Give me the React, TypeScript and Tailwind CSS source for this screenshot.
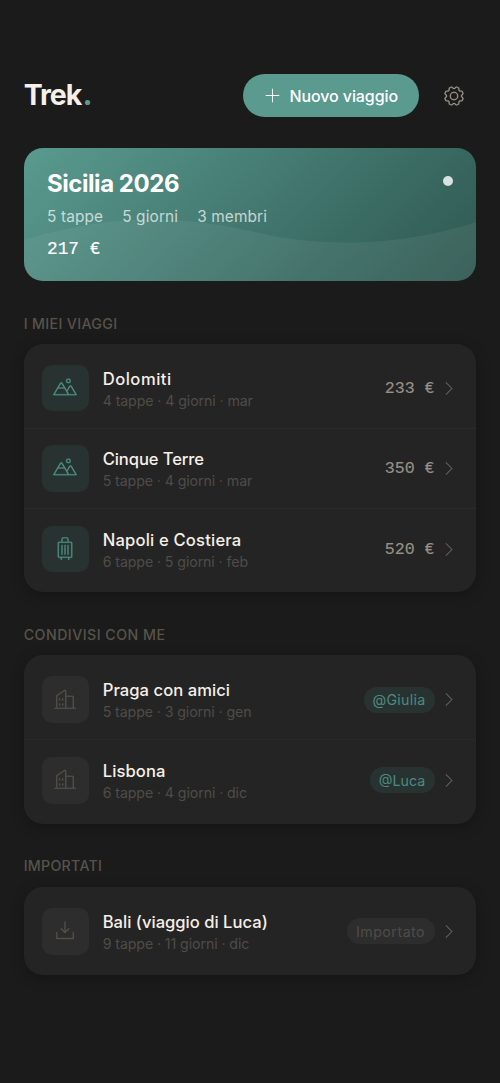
import type { IconType } from "react-icons";
import {
  PiBuildingsLight,
  PiCaretRightLight,
  PiDownloadSimpleLight,
  PiGearLight,
  PiMountainsLight,
  PiPlusLight,
  PiSuitcaseRollingLight,
} from "react-icons/pi";

type Trip = {
  name: string;
  details: string;
  icon: IconType;
  nameClass: string;
  price?: string;
  badge?: string;
  badgeClass?: string;
};

type Section = {
  title: string;
  titleClass: string;
  accent: boolean;
  trips: Trip[];
};

const sections: Section[] = [
  {
    title: "I MIEI VIAGGI",
    titleClass: "tracking-[0.35px]",
    accent: true,
    trips: [
      {
        name: "Dolomiti",
        details: "4 tappe · 4 giorni · mar",
        icon: PiMountainsLight,
        nameClass: "tracking-[0.5px]",
        price: "233 €",
      },
      {
        name: "Cinque Terre",
        details: "5 tappe · 4 giorni · mar",
        icon: PiMountainsLight,
        nameClass: "tracking-[-0.1px]",
        price: "350 €",
      },
      {
        name: "Napoli e Costiera",
        details: "6 tappe · 5 giorni · feb",
        icon: PiSuitcaseRollingLight,
        nameClass: "tracking-[0.18px]",
        price: "520 €",
      },
    ],
  },
  {
    title: "CONDIVISI CON ME",
    titleClass: "tracking-[0.48px]",
    accent: false,
    trips: [
      {
        name: "Praga con amici",
        details: "5 tappe · 3 giorni · gen",
        icon: PiBuildingsLight,
        nameClass: "tracking-[0.05px]",
        badge: "@Giulia",
        badgeClass: "w-[71px] bg-[#283331] text-[#4d8a80] tracking-[0.3px]",
      },
      {
        name: "Lisbona",
        details: "6 tappe · 4 giorni · dic",
        icon: PiBuildingsLight,
        nameClass: "tracking-[0.1px]",
        badge: "@Luca",
        badgeClass: "w-[65px] bg-[#283331] text-[#4d8a80]",
      },
    ],
  },
  {
    title: "IMPORTATI",
    titleClass: "tracking-[0.28px]",
    accent: false,
    trips: [
      {
        name: "Bali (viaggio di Luca)",
        details: "9 tappe · 11 giorni · dic",
        icon: PiDownloadSimpleLight,
        nameClass: "tracking-normal",
        badge: "Importato",
        badgeClass: "w-[88px] bg-[#2d2d2d] text-[#4f4c47] tracking-[0.5px]",
      },
    ],
  },
];

function Header() {
  return (
    <header className="flex h-[43px] items-center">
      <h1 className="flex-1 pb-[2px] text-[28.5px] leading-none font-bold tracking-[-1.1px] text-[#f5f0e8]">
        Trek
        <span className="ml-[2px] font-['Open_Sans',sans-serif] text-[30px] leading-none text-[#5a9a8f]">
          .
        </span>
      </h1>
      <button className="flex h-[43px] w-[175.5px] items-center rounded-full bg-[#5a9a8f] pl-[19.5px] text-white">
        <PiPlusLight className="size-[19px]" />
        <span className="ml-2 text-[16px] font-medium tracking-[-0.1px] whitespace-nowrap">
          Nuovo viaggio
        </span>
      </button>
      <button className="ml-[23.5px] mr-[10.3px] text-[#a09888]">
        <PiGearLight className="size-[24px]" stroke="currentColor" strokeWidth={2} />
      </button>
    </header>
  );
}

function CurrentTrip() {
  return (
    <section className="relative mt-[31px] h-[133px] overflow-hidden rounded-[19px] bg-[linear-gradient(135deg,#5a9a8f_0%,#3a6b63_70%,#305851_100%)] px-[23.3px] pt-[21px] text-white">
      <svg
        className="absolute inset-0 size-full"
        viewBox="0 0 453 133"
        preserveAspectRatio="none"
      >
        <path d="M0 92Q113 56 226 83T453 74V133H0Z" fill="#fff" fillOpacity="0.06" />
      </svg>
      <div className="relative">
        <div className="flex items-start justify-between">
          <h2 className="text-[24px] leading-[29px] font-bold tracking-[-0.45px]">Sicilia 2026</h2>
          <span className="mt-[6.5px] size-[10px] rounded-full bg-[#d8e2e0]" />
        </div>
        <div className="mt-[7px] flex gap-[19px] text-[15.4px] leading-[23px] tracking-[0.13px] text-white/70">
          <span>5 tappe</span>
          <span>5 giorni</span>
          <span>3 membri</span>
        </div>
        <p className="mt-[9.5px] font-['Liberation_Mono',monospace] text-[17.8px] leading-[23px] [-webkit-text-stroke:0.15px]">
          217 €
        </p>
      </div>
    </section>
  );
}

function TripRow({ trip, accent }: { trip: Trip; accent: boolean }) {
  const Icon = trip.icon;

  return (
    <div
      className={`flex h-[80.3px] items-center border-b px-[18.5px] last:border-b-0 ${
        accent ? "border-[#2a2a26]" : "border-[#292929]"
      }`}
    >
      <div
        className={`flex size-[46.5px] items-center justify-center rounded-[10px] ${
          accent ? "bg-[#283331] text-[#4f9387]" : "bg-[#2d2d2d] text-[#58544c]"
        }`}
      >
        <Icon className="size-[24px]" stroke="currentColor" strokeWidth={2} />
      </div>
      <div className="ml-[14px] flex-1 pt-[2px] whitespace-nowrap">
        <h3 className={`text-[16.6px] leading-[22px] font-medium text-[#f5f0e8] ${trip.nameClass}`}>
          {trip.name}
        </h3>
        <p className="text-[14.2px] leading-[21px] tracking-[-0.1px] text-[#4f4c47]">
          {trip.details}
        </p>
      </div>
      {trip.price && (
        <span className="pt-[2px] font-['Liberation_Mono',monospace] text-[16.6px] text-[#989184] [-webkit-text-stroke:0.15px]">
          {trip.price}
        </span>
      )}
      {trip.badge && (
        <span
          className={`flex h-[26px] items-center justify-center rounded-full text-[14.2px] ${trip.badgeClass}`}
        >
          {trip.badge}
        </span>
      )}
      <PiCaretRightLight className="ml-[4.3px] size-[19px] text-[#6b665c]" />
    </div>
  );
}

export default function App() {
  return (
    <main className="min-h-[1083px] bg-[#1b1b1b] px-[23.7px] pt-[74px] font-[Inter,sans-serif]">
      <Header />
      <CurrentTrip />
      {sections.map((section) => (
        <section key={section.title} className="mt-[31.8px]">
          <h2
            className={`h-[21px] text-[14.2px] leading-[21px] font-medium text-[#57534a] ${section.titleClass}`}
          >
            {section.title}
          </h2>
          <div className="mt-[10.2px] rounded-[19px] bg-[#242424] pt-[4.5px] pb-[3.1px] shadow-[0_3px_14px_rgba(0,0,0,0.25)]">
            {section.trips.map((trip) => (
              <TripRow key={trip.name} trip={trip} accent={section.accent} />
            ))}
          </div>
        </section>
      ))}
    </main>
  );
}
